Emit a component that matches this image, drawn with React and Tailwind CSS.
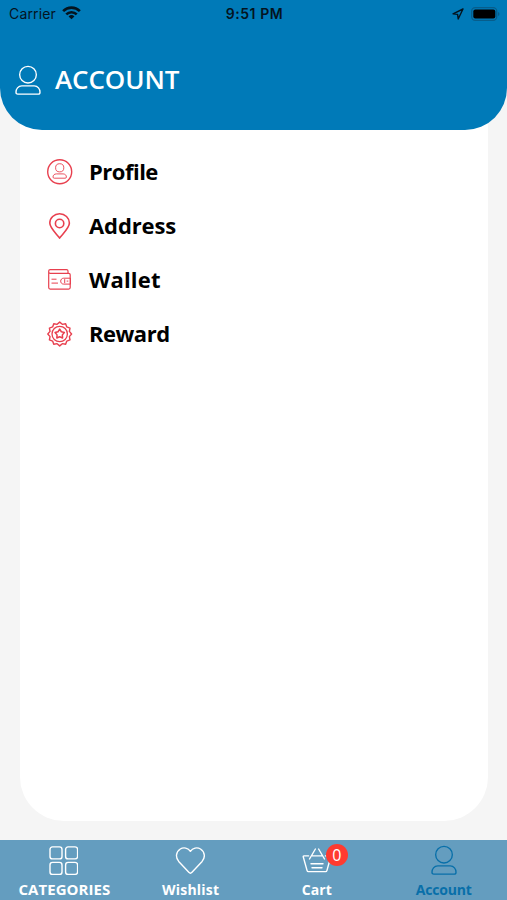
// App.jsx
import React, { useState } from "react";

const UserIcon = ({ className }) => (
  <svg viewBox="0 0 28 32" fill="none" stroke="currentColor" strokeWidth="1.4" className={className}>
    <circle cx="14" cy="10" r="8.6" />
    <path d="M7.6 21.6h12.8c3.8 0 6 3.2 6 6.4 0 1.4-.5 2-1.9 2h-21c-1.4 0-1.9-.6-1.9-2 0-3.2 2.2-6.4 6-6.4z" />
  </svg>
);

const ProfileIcon = () => (
  <svg viewBox="0 0 26 26" fill="none" stroke="currentColor" className="size-[26px]">
    <circle cx="12.7" cy="12.8" r="12" strokeWidth="1.4" />
    <circle cx="12.7" cy="8.8" r="4.1" strokeWidth=".9" />
    <path d="M9.3 14.9h6.8c2 0 3.3 1.4 3.3 3.1 0 .8-.4 1.2-1.2 1.2h-11c-.8 0-1.2-.4-1.2-1.2 0-1.7 1.3-3.1 3.3-3.1z" strokeWidth=".9" />
  </svg>
);

const PinIcon = () => (
  <svg viewBox="0 0 26 26" fill="none" stroke="currentColor" strokeWidth="1.6" className="size-[26px]">
    <path d="M12.6 25C9 20.4 2.8 15 2.8 10.1a9.8 9.3 0 0 1 19.6 0C22.4 15 16.2 20.4 12.6 25z" />
    <circle cx="12.6" cy="10.5" r="4.2" />
  </svg>
);

const WalletIcon = () => (
  <svg viewBox="0 0 26 26" fill="none" stroke="currentColor" strokeWidth="1.2" className="size-[26px]">
    <path d="M21 6.3V4.1c0-1-.5-1.5-1.5-1.5H3.2a1.5 1.5 0 0 0-1.5 1.5v16.5c0 1 .6 1.5 1.5 1.5h18.5c1 0 1.5-.5 1.5-1.5V7.8c0-1-.5-1.5-1.5-1.5H3.2a1.5 1.5 0 0 1-1.5-1.5" />
    <path d="M23.5 11.2h-6.8c-4 0-4 5.9 0 5.9h6.8zM17.7 12.1v4M19.7 14.1h1.6M4.5 12.2h5M4.5 16.1H11" strokeWidth="1" />
  </svg>
);

const points = (count, outer, inner) =>
  Array.from({ length: count * 2 }, (_, i) => {
    const r = i % 2 ? inner : outer;
    const a = (i * Math.PI) / count - Math.PI / 2;
    return `${(12.7 + r * Math.cos(a)).toFixed(2)},${(13 + r * Math.sin(a)).toFixed(2)}`;
  }).join(" ");

const RewardIcon = () => (
  <svg viewBox="0 0 26 26" fill="none" stroke="currentColor" strokeLinejoin="round" className="size-[26px]">
    <polygon points={points(12, 11.9, 10)} strokeWidth="1.4" />
    <circle cx="12.7" cy="13" r="7.7" strokeWidth="1.3" />
    <polygon points={points(5, 4.9, 2.8)} strokeWidth="1.5" />
  </svg>
);

const GridIcon = () => (
  <svg viewBox="0 0 30 30" fill="none" stroke="currentColor" strokeWidth="1.4" className="size-[30px]">
    <rect x="2" y=".9" width="12" height="12" rx="2.5" />
    <rect x="17.6" y=".9" width="12" height="12" rx="2.5" />
    <rect x="2" y="16.4" width="12" height="12" rx="2.5" />
    <rect x="17.6" y="16.4" width="12" height="12" rx="2.5" />
  </svg>
);

const HeartIcon = () => (
  <svg viewBox="0 0 30 30" fill="none" stroke="currentColor" strokeWidth="1.4" strokeLinejoin="round" className="size-[30px]">
    <path d="M15.4 5.3C13.1 1.8 8.6 1 5.3 3 .8 5.9.3 11.5 3.7 15.4L13.8 26.3c1.1 1.2 2.1 1.2 3.2 0l10.1-10.9c3.4-3.9 2.9-9.5-1.6-12.4-3.3-2-7.8-1.2-10.1 2.3z" />
  </svg>
);

const BasketIcon = () => (
  <svg viewBox="0 0 30 30" fill="none" stroke="currentColor" strokeWidth="1.4" strokeLinecap="round" strokeLinejoin="round" className="size-[30px]">
    <path d="M6.6 9.9H2c-.7 0-.9.4-.7 1.1l3.8 13.6c.2.7.5 1 1.2 1h17.4c.7 0 1-.3 1.2-1L28.7 11c.2-.7 0-1.1-.7-1.1h-4.6M10.6 9.9h8.8M7.5 13L13.4 3M22.5 13L16.6 3M9 17.8h12M10 21.7h10" />
  </svg>
);

const menu = [
  { label: "Profile", Icon: ProfileIcon, spacing: "tracking-[-0.5px]" },
  { label: "Address", Icon: PinIcon, spacing: "tracking-[-0.1px]" },
  { label: "Wallet", Icon: WalletIcon, spacing: "tracking-[0.2px]" },
  { label: "Reward", Icon: RewardIcon, spacing: "tracking-[-0.5px]" },
];

const tabs = [
  { label: "CATEGORIES", Icon: GridIcon, spacing: "pl-[2px] text-[15px] tracking-[0.05px]" },
  { label: "Wishlist", Icon: HeartIcon, spacing: "pl-[1px] tracking-[0.2px]" },
  { label: "Cart", Icon: BasketIcon, badge: 0, spacing: "tracking-[0.1px]" },
  { label: "Account", Icon: () => <UserIcon className="h-[31px] w-[28px]" />, spacing: "tracking-[-0.2px]" },
];

const StatusBar = () => (
  <div className="grid h-7 grid-cols-3 items-center pl-[9px] pr-[7px] font-['Inter',sans-serif] text-[14px] text-[#04141f]">
    <div className="flex items-center gap-[6px]">
      <span className="-mt-px tracking-[0.15px]">Carrier</span>
      <svg viewBox="0 0 20 14" className="-mt-[2px] h-[14px] w-[19px]" fill="none" stroke="currentColor" strokeWidth="2.8">
        <path d="M1.2 5a12.5 12.5 0 0 1 17.6 0M4.5 8.5a7.8 7.8 0 0 1 11 0" />
        <path d="M6.9 10.6a4.5 4.5 0 0 1 6.2 0L10 13.7z" fill="currentColor" stroke="none" />
      </svg>
    </div>
    <span className="-mt-px text-center font-semibold tracking-[0.55px]">9:51 PM</span>
    <div className="-mt-px flex items-center justify-end gap-[7px]">
      <svg viewBox="0 0 12 12" className="size-[12px]" fill="none" stroke="currentColor" strokeWidth="1.4" strokeLinejoin="round">
        <path d="M11 1L1 5.8l4.6.6.6 4.6z" />
      </svg>
      <svg viewBox="0 0 29 14" className="h-[14px] w-[29px]">
        <rect x=".7" y=".7" width="25" height="12.6" rx="3.5" fill="none" stroke="#075d8b" strokeWidth="1.3" />
        <rect x="2.3" y="2.5" width="22" height="9" rx="2" fill="#000" />
        <path d="M27 5c2 .7 2 3.3 0 4z" fill="#075d8b" />
      </svg>
    </div>
  </div>
);

const App = () => {
  const [active, setActive] = useState("Account");

  return (
    <div className="flex h-[900px] w-full flex-col overflow-hidden bg-[#f5f5f5] font-['Open_Sans',sans-serif]">
      <div className="flex min-h-0 flex-1 flex-col">
        <header className="z-10 h-[130px] shrink-0 rounded-b-[42px] bg-[#007ab8]">
          <StatusBar />
          <div className="mt-[37px] flex items-center gap-[13px] pl-[14px] text-white">
            <UserIcon className="h-[31px] w-[28px]" />
            <h1 className="-mt-[2px] text-[26px] leading-[31px] font-semibold tracking-[-0.1px]">ACCOUNT</h1>
          </div>
        </header>
        <main className="-mt-[10px] mr-[19px] mb-[19px] ml-[20px] flex-1 rounded-b-[44px] bg-white pt-[25px]">
          {menu.map(({ label, Icon, spacing }) => (
            <button key={label} className="flex h-[54px] w-full items-center gap-[16px] pl-[27px]">
              <span className="text-[#e8404f]">
                <Icon />
              </span>
              <span className={`pb-[2px] text-[22px] leading-none font-bold text-black ${spacing}`}>{label}</span>
            </button>
          ))}
        </main>
      </div>
      <nav className="grid h-[60px] shrink-0 grid-cols-4 bg-[#649dbf]">
        {tabs.map(({ label, Icon, badge, spacing }) => (
          <button
            key={label}
            onClick={() => setActive(label)}
            className={`flex flex-col items-center pt-[5px] text-[14px] ${active === label ? "text-[#086fa9]" : "text-white"}`}
          >
            <span className="relative flex h-[31px] items-center">
              <Icon />
              {badge !== undefined && (
                <span className="absolute -top-[1px] -right-[16px] flex size-[22px] items-center justify-center rounded-full bg-[#ff3b30] text-[16px]">
                  {badge}
                </span>
              )}
            </span>
            <span className={`mt-[4px] leading-[19px] font-bold ${spacing}`}>{label}</span>
          </button>
        ))}
      </nav>
    </div>
  );
};

export default App;
